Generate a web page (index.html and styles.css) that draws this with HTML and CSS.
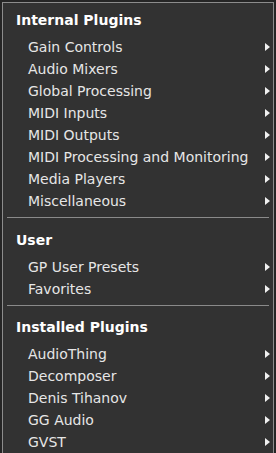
FILE: index.html
```html
<!DOCTYPE html>
<html lang="en">
<head>
    <meta charset="UTF-8">
    <meta name="viewport" content="width=device-width, initial-scale=1.0">
    <title>Plugin Menu</title>
    <link rel="stylesheet" href="styles.css">
</head>
<body>
    <div class="menu">
        <div class="header">Internal Plugins</div>
        <div class="item">Gain Controls<span class="arrow"></span></div>
        <div class="item">Audio Mixers<span class="arrow"></span></div>
        <div class="item">Global Processing<span class="arrow"></span></div>
        <div class="item">MIDI Inputs<span class="arrow"></span></div>
        <div class="item">MIDI Outputs<span class="arrow"></span></div>
        <div class="item">MIDI Processing and Monitoring<span class="arrow"></span></div>
        <div class="item">Media Players<span class="arrow"></span></div>
        <div class="item">Miscellaneous<span class="arrow"></span></div>
        <div class="separator"></div>

        <div class="header">User</div>
        <div class="item">GP User Presets<span class="arrow"></span></div>
        <div class="item">Favorites<span class="arrow"></span></div>
        <div class="separator"></div>

        <div class="header">Installed Plugins</div>
        <div class="item">AudioThing<span class="arrow"></span></div>
        <div class="item">Decomposer<span class="arrow"></span></div>
        <div class="item">Denis Tihanov<span class="arrow"></span></div>
        <div class="item">GG Audio<span class="arrow"></span></div>
        <div class="item">GVST<span class="arrow"></span></div>
    </div>
</body>
</html>
```

FILE: styles.css
```css
/* Plugin popup menu */
body {
    font-family: "DejaVu Sans", Verdana, sans-serif;
    background-color: #252525;
    margin: 0;
    padding: 0;
    height: 453px;
    overflow: hidden;
}

.menu {
    margin: 2px 0 0 2px;
    width: 270px;
    height: 460px;
    background-color: #323232;
    border: 1px solid #8c8c8c;
    border-bottom: none;
}

.header {
    padding: 6px 0 5px 13px;
    line-height: 22px;
    font-size: 14px;
    font-weight: bold;
    color: #ffffff;
}

.item {
    display: flex;
    align-items: center;
    justify-content: space-between;
    height: 22px;
    padding: 0 3px 0 25px;
    font-size: 14px;
    color: #e6e6e6;
}

.arrow {
    width: 0;
    height: 0;
    border-left: 5px solid #f0f0f0;
    border-top: 4px solid transparent;
    border-bottom: 4px solid transparent;
}

.separator {
    height: 1px;
    margin: 5px 4px;
    background-color: #8a8a8a;
}

.separator + .header + .item + .item + .separator {
    margin-bottom: 4px;
}
```
